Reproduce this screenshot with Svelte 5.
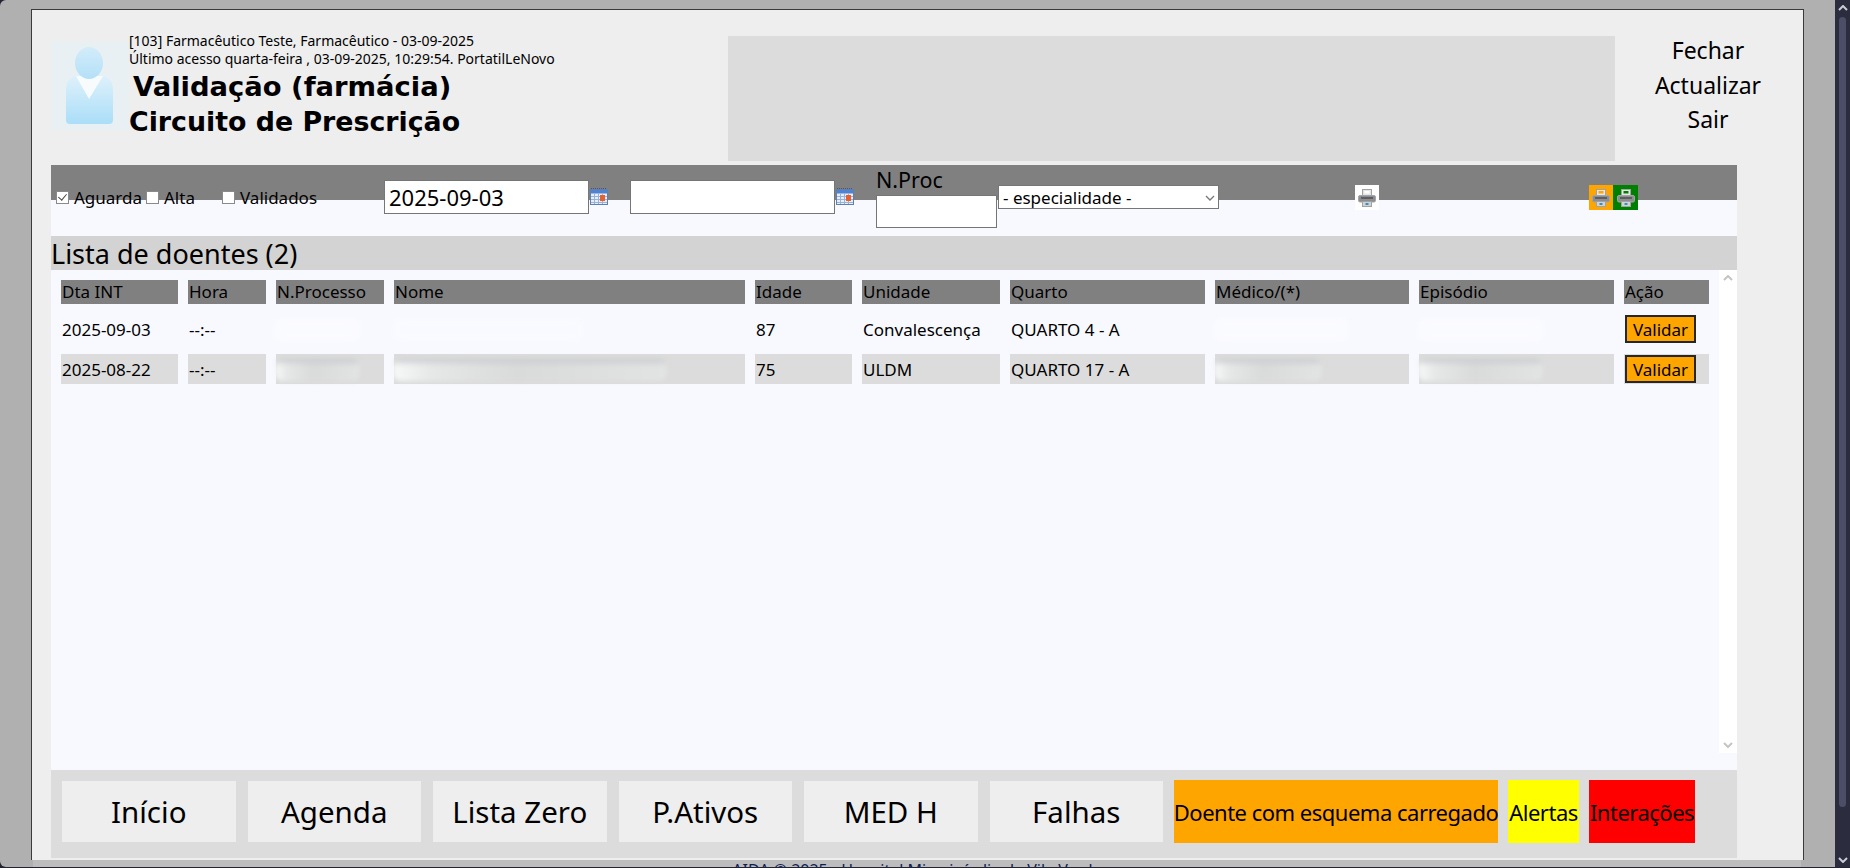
<script>
  const menu = ['Início', 'Agenda', 'Lista Zero', 'P.Ativos', 'MED H', 'Falhas'];
  const heads = ['Dta INT', 'Hora', 'N.Processo', 'Nome', 'Idade', 'Unidade', 'Quarto', 'Médico/(*)', 'Episódio', 'Ação'];
  const widths = [117, 78, 108, 351, 97, 138, 195, 194, 195, 85];
  const rows = [
    { date: '2025-09-03', age: '87', unit: 'Convalescença', room: 'QUARTO 4 - A', alt: false },
    { date: '2025-08-22', age: '75', unit: 'ULDM', room: 'QUARTO 17 - A', alt: true }
  ];
</script>

{#snippet calendar()}
  <svg class="cal" width="18" height="17" viewBox="0 0 18 17">
    <path d="M1 0.5h16" stroke="#555" stroke-dasharray="1 1" fill="none"/>
    <rect x="0.5" y="1.5" width="17" height="15" fill="#e8eef8" stroke="#5f7fb0"/>
    <rect x="1" y="2" width="16" height="3.5" fill="#4f82d2"/>
    <path d="M1 8.5h16M1 11.5h16M1 14.5h16M4.5 6v10M8.5 6v10M12.5 6v10" stroke="#98b2da" fill="none"/>
    <rect x="10" y="7" width="5" height="6" fill="#e8602c"/>
  </svg>
{/snippet}

{#snippet printer(paper)}
  <svg width="20" height="20" viewBox="0 0 20 20">
    <rect x="5.5" y="1.5" width="9" height="7" fill="#e6e6e6" stroke="#a2a2a2"/>
    <rect x="7.5" y="3" width="5" height="2.5" fill={paper}/>
    <rect x="1.5" y="7.5" width="17" height="6.5" rx="1.5" fill="#8b8d90" stroke="#a5a5a5"/>
    <rect x="4" y="9" width="12" height="2" fill="#5c5e62"/>
    <rect x="5.5" y="13.5" width="9" height="5" fill="#d2d2d2" stroke="#a2a2a2"/>
    <rect x="8.5" y="15" width="3" height="2" fill="#2f93c9"/>
  </svg>
{/snippet}

<div class="page">
  <div class="desk">
    <div class="window">
      <header class="top">
        <svg class="avatar" width="78" height="89" viewBox="0 0 78 89">
          <defs>
            <linearGradient id="head" x1="0" y1="0" x2="0" y2="1">
              <stop offset="0" stop-color="#d3ecfa"/>
              <stop offset="1" stop-color="#b4e0f8"/>
            </linearGradient>
            <linearGradient id="torso" x1="0" y1="0" x2="0" y2="1">
              <stop offset="0" stop-color="#dff1fb"/>
              <stop offset="1" stop-color="#aadef8"/>
            </linearGradient>
          </defs>
          <rect width="78" height="89" fill="#e9f0f3"/>
          <path d="M25 34 Q15 38 15 48 V79 Q15 83 19 83 H58 Q62 83 62 79 V48 Q62 38 52 34 Z" fill="url(#torso)"/>
          <path d="M25 35 L38 58 L52 35 Z" fill="#f8fbfc"/>
          <ellipse cx="38" cy="22" rx="14" ry="16" fill="url(#head)"/>
        </svg>
        <div class="who">
          <p class="line">[103] Farmacêutico Teste, Farmacêutico - 03-09-2025</p>
          <p class="line">Último acesso quarta-feira , 03-09-2025, 10:29:54. PortatilLeNovo</p>
          <h1>Validação (farmácia)</h1>
          <h2>Circuito de Prescrição</h2>
        </div>
        <div class="notice"></div>
        <nav class="actions">
          <span>Fechar</span>
          <span>Actualizar</span>
          <span>Sair</span>
        </nav>
      </header>

      <section class="board">
        <div class="filters">
          <label class="chk first"><input type="checkbox" checked />Aguarda</label>
          <label class="chk alta"><input type="checkbox" />Alta</label>
          <label class="chk validados"><input type="checkbox" />Validados</label>
          <input class="date from" value="2025-09-03" />
          {@render calendar()}
          <input class="date to" />
          {@render calendar()}
          <div class="nproc">
            <span>N.Proc</span>
            <input />
          </div>
          <div class="spec">
            <select>
              <option>- especialidade -</option>
            </select>
            <svg width="10" height="6" viewBox="0 0 10 6"><path d="M1 1l4 4 4-4" fill="none" stroke="#777" stroke-width="1.3"/></svg>
          </div>
          <div class="print white">{@render printer('#fff')}</div>
          <div class="print orange">{@render printer('#ffa500')}</div>
          <div class="print green">{@render printer('#008000')}</div>
        </div>

        <div class="title">Lista de doentes (2)</div>

        <div class="listing">
          <table>
            <thead>
              <tr>
                {#each heads as h, i}
                  <th style="width: {widths[i]}px">{h}</th>
                {/each}
              </tr>
            </thead>
            <tbody>
              {#each rows as r}
                <tr class:alt={r.alt}>
                  <td>{r.date}</td>
                  <td>--:--</td>
                  <td><div class="smear s-proc"></div></td>
                  <td><div class="smear s-name"></div></td>
                  <td>{r.age}</td>
                  <td>{r.unit}</td>
                  <td>{r.room}</td>
                  <td><div class="smear s-med"></div></td>
                  <td><div class="smear s-epi"></div></td>
                  <td class="act"><button>Validar</button></td>
                </tr>
              {/each}
            </tbody>
          </table>
          <div class="scroll">
            <svg width="10" height="6" viewBox="0 0 10 6"><path d="M1 5l4-4 4 4" fill="none" stroke="#c4c4c4" stroke-width="2"/></svg>
            <svg width="10" height="6" viewBox="0 0 10 6"><path d="M1 1l4 4 4-4" fill="none" stroke="#c4c4c4" stroke-width="2"/></svg>
          </div>
        </div>

        <div class="menu">
          {#each menu as m}
            <div class="item">{m}</div>
          {/each}
          <div class="flag f-orange">Doente com esquema carregado</div>
          <div class="flag f-yellow">Alertas</div>
          <div class="flag f-red">Interações</div>
        </div>
      </section>
    </div>
    <footer>AIDA © 2025 - Hospital Misericórdia de Vila Verde</footer>
  </div>

  <div class="pagebar">
    <svg width="10" height="6" viewBox="0 0 10 6"><path d="M1 5l4-4 4 4" fill="none" stroke="#c9cbd6" stroke-width="2"/></svg>
    <div class="thumb"></div>
    <svg width="10" height="6" viewBox="0 0 10 6"><path d="M1 1l4 4 4-4" fill="none" stroke="#c9cbd6" stroke-width="2"/></svg>
  </div>
</div>

<style>
  :global(body) {
    margin: 0;
    overflow: hidden;
    background: #23242f;
    font-family: "Noto Sans", Tahoma, sans-serif;
    color: #000;
  }

  .page {
    display: flex;
    height: 867px;
    width: 1850px;
    background: #b0b0b0;
    overflow: hidden;
    border-radius: 6px 0 0 6px;
  }

  .desk {
    width: 1835px;
    flex: none;
    display: flex;
    flex-direction: column;
    padding: 9px 0 0 31px;
    box-sizing: border-box;
  }

  .window {
    width: 1773px;
    height: 851px;
    flex: none;
    box-sizing: border-box;
    border: 1px solid #3a3a3a;
    border-bottom: 0;
    background: #eee;
    padding-left: 19px;
  }

  .top {
    display: flex;
    height: 155px;
    box-sizing: border-box;
  }

  .avatar {
    margin-top: 31px;
    flex: none;
  }

  .who {
    width: 599px;
    flex: none;
    padding-top: 22px;
  }

  .line {
    margin: 0;
    font-size: 14px;
    line-height: 18px;
    height: 18px;
    white-space: nowrap;
  }

  h1, h2 {
    margin: 0;
    font-family: "DejaVu Sans", sans-serif;
    font-weight: 700;
    white-space: nowrap;
    line-height: 36px;
  }

  h1 {
    font-size: 27.4px;
    padding-left: 4px;
    position: relative;
    top: 1px;
  }

  h2 {
    font-size: 26.8px;
  }

  .notice {
    width: 887px;
    height: 125px;
    margin-top: 26px;
    background: #dcdcdc;
    flex: none;
  }

  .actions {
    width: 186px;
    display: flex;
    flex-direction: column;
    align-items: center;
    padding-top: 23px;
    font-size: 23px;
    line-height: 34.5px;
  }

  .board {
    width: 1686px;
  }

  .filters {
    height: 71px;
    display: flex;
    align-items: flex-start;
    background: linear-gradient(#808080 35px, #f8f9ff 35px);
  }

  .chk {
    display: flex;
    align-items: center;
    font-size: 17px;
    height: 24px;
    margin-top: 20px;
    white-space: nowrap;
  }

  .chk input {
    appearance: none;
    position: relative;
    box-sizing: border-box;
    margin: 0 5px 0 0;
    width: 13px;
    height: 13px;
    background: #fff;
    border: 1px solid #8a8a8a;
    border-radius: 0;
  }

  .chk input:checked::after {
    content: '';
    position: absolute;
    left: 3px;
    top: 0;
    width: 4px;
    height: 7px;
    border: solid #444;
    border-width: 0 1.5px 1.5px 0;
    transform: rotate(40deg);
  }

  .first { margin-left: 5px; width: 90px; }
  .alta { width: 76px; }
  .validados { width: 162px; }

  input.date {
    width: 205px;
    height: 34px;
    margin-top: 15px;
    box-sizing: border-box;
    border: 1px solid #767676;
    font: 22px "Noto Sans", sans-serif;
    padding: 0 4px;
    background: #fff;
  }

  .cal {
    margin: 23px 0 0 1px;
    flex: none;
  }

  input.to {
    margin-left: 22px;
  }

  .nproc {
    width: 121px;
    margin-left: 22px;
    display: flex;
    flex-direction: column;
    font-size: 21.5px;
    line-height: 30px;
  }

  .nproc input {
    width: 121px;
    height: 33px;
    box-sizing: border-box;
    border: 1px solid #767676;
    background: #fff;
  }

  .spec {
    position: relative;
    margin: 20px 0 0 1px;
  }

  .spec select {
    display: block;
    width: 221px;
    height: 24px;
    box-sizing: border-box;
    border: 1px solid #767676;
    border-radius: 0;
    appearance: none;
    background: #fff;
    font: 17px "Noto Sans", sans-serif;
    padding: 0 4px;
  }

  .spec svg {
    position: absolute;
    right: 4px;
    top: 10px;
  }

  .print {
    width: 24px;
    height: 25px;
    margin-top: 20px;
    display: flex;
    align-items: center;
    justify-content: center;
  }

  .white { background: #fff; margin-left: 136px; }
  .orange { background: #ffa500; margin-left: 210px; }
  .green { background: #008000; width: 25px; }

  .title {
    height: 34px;
    background: #d3d3d3;
    font-size: 27px;
    line-height: 36px;
    white-space: nowrap;
  }

  .listing {
    height: 500px;
    background: #f8f9ff;
    display: flex;
    align-items: flex-start;
  }

  table {
    border-spacing: 10px;
    table-layout: fixed;
    border-collapse: separate;
    width: 1668px;
    flex: none;
    font-size: 17px;
  }

  th {
    box-sizing: border-box;
    height: 24px;
    padding: 0 0 0 1px;
    background: #808080;
    color: #000;
    font-weight: 400;
    text-align: left;
    white-space: nowrap;
    line-height: 24px;
  }

  td {
    box-sizing: border-box;
    height: 30px;
    padding: 1px 0 0 1px;
    white-space: nowrap;
  }

  .alt td {
    background: #dcdcdc;
  }

  td.act {
    padding: 0 0 0 1px;
  }

  .smear {
    height: 22px;
    margin-left: -2px;
    border-radius: 8px;
    filter: blur(2.5px);
    background: #fdfdff;
    opacity: 0.55;
  }

  .alt .smear {
    opacity: 1;
    background:
      linear-gradient(#c4c7ca, transparent 30%),
      linear-gradient(90deg, #f7f8f8, #e6e8e8 14%, #d9dada 45%, #e2e3e3);
  }

  .s-proc { width: 85px; }
  .s-name { width: 274px; }
  .s-med { width: 108px; }
  .s-epi { width: 125px; }
  tr:not(.alt) .s-name { width: 190px; opacity: 0.35; }
  tr:not(.alt) .s-med { width: 134px; }

  button {
    display: block;
    width: 71px;
    height: 28px;
    box-sizing: border-box;
    background: #ffa500;
    border: 2px solid #26262e;
    border-radius: 0;
    font: 17px "Noto Sans", sans-serif;
    color: #000;
    padding: 0;
  }

  .scroll {
    width: 18px;
    height: 483px;
    flex: none;
    background: #fff;
    display: flex;
    flex-direction: column;
    justify-content: space-between;
    align-items: center;
    padding: 5px 0;
    box-sizing: border-box;
  }

  .menu {
    height: 88px;
    box-sizing: border-box;
    background: #dcdcdc;
    display: flex;
    align-items: flex-start;
    padding: 10px 0 0 11px;
  }

  .item {
    width: 173.5px;
    height: 61px;
    margin: 1px 12px 0 0;
    background: #eee;
    display: flex;
    align-items: center;
    justify-content: center;
    font-size: 29.5px;
    white-space: nowrap;
  }

  .flag {
    height: 63px;
    display: flex;
    align-items: center;
    justify-content: center;
    font-size: 22px;
    white-space: nowrap;
    letter-spacing: -0.5px;
  }

  .f-orange { background: #ffa500; width: 324px; margin-left: -1px; }
  .f-yellow { background: #ff0; width: 71px; margin-left: 10px; }
  .f-red { background: #f00; width: 106px; margin-left: 10px; }

  footer {
    flex: none;
    width: 1768px;
    margin: 0 0 0 2px;
    height: 7px;
    background: #bdbdbd;
    font-size: 16px;
    line-height: 20px;
    color: #0b1e5b;
    text-align: center;
    overflow: hidden;
    white-space: nowrap;
  }

  .pagebar {
    width: 15px;
    flex: none;
    background: #2b2d3f;
    display: flex;
    flex-direction: column;
    align-items: center;
    padding: 5px 0 4px;
    box-sizing: border-box;
    gap: 6px;
  }

  .thumb {
    width: 7px;
    height: 790px;
    margin-bottom: auto;
    border-radius: 4px;
    background: #4b4e66;
  }
</style>
